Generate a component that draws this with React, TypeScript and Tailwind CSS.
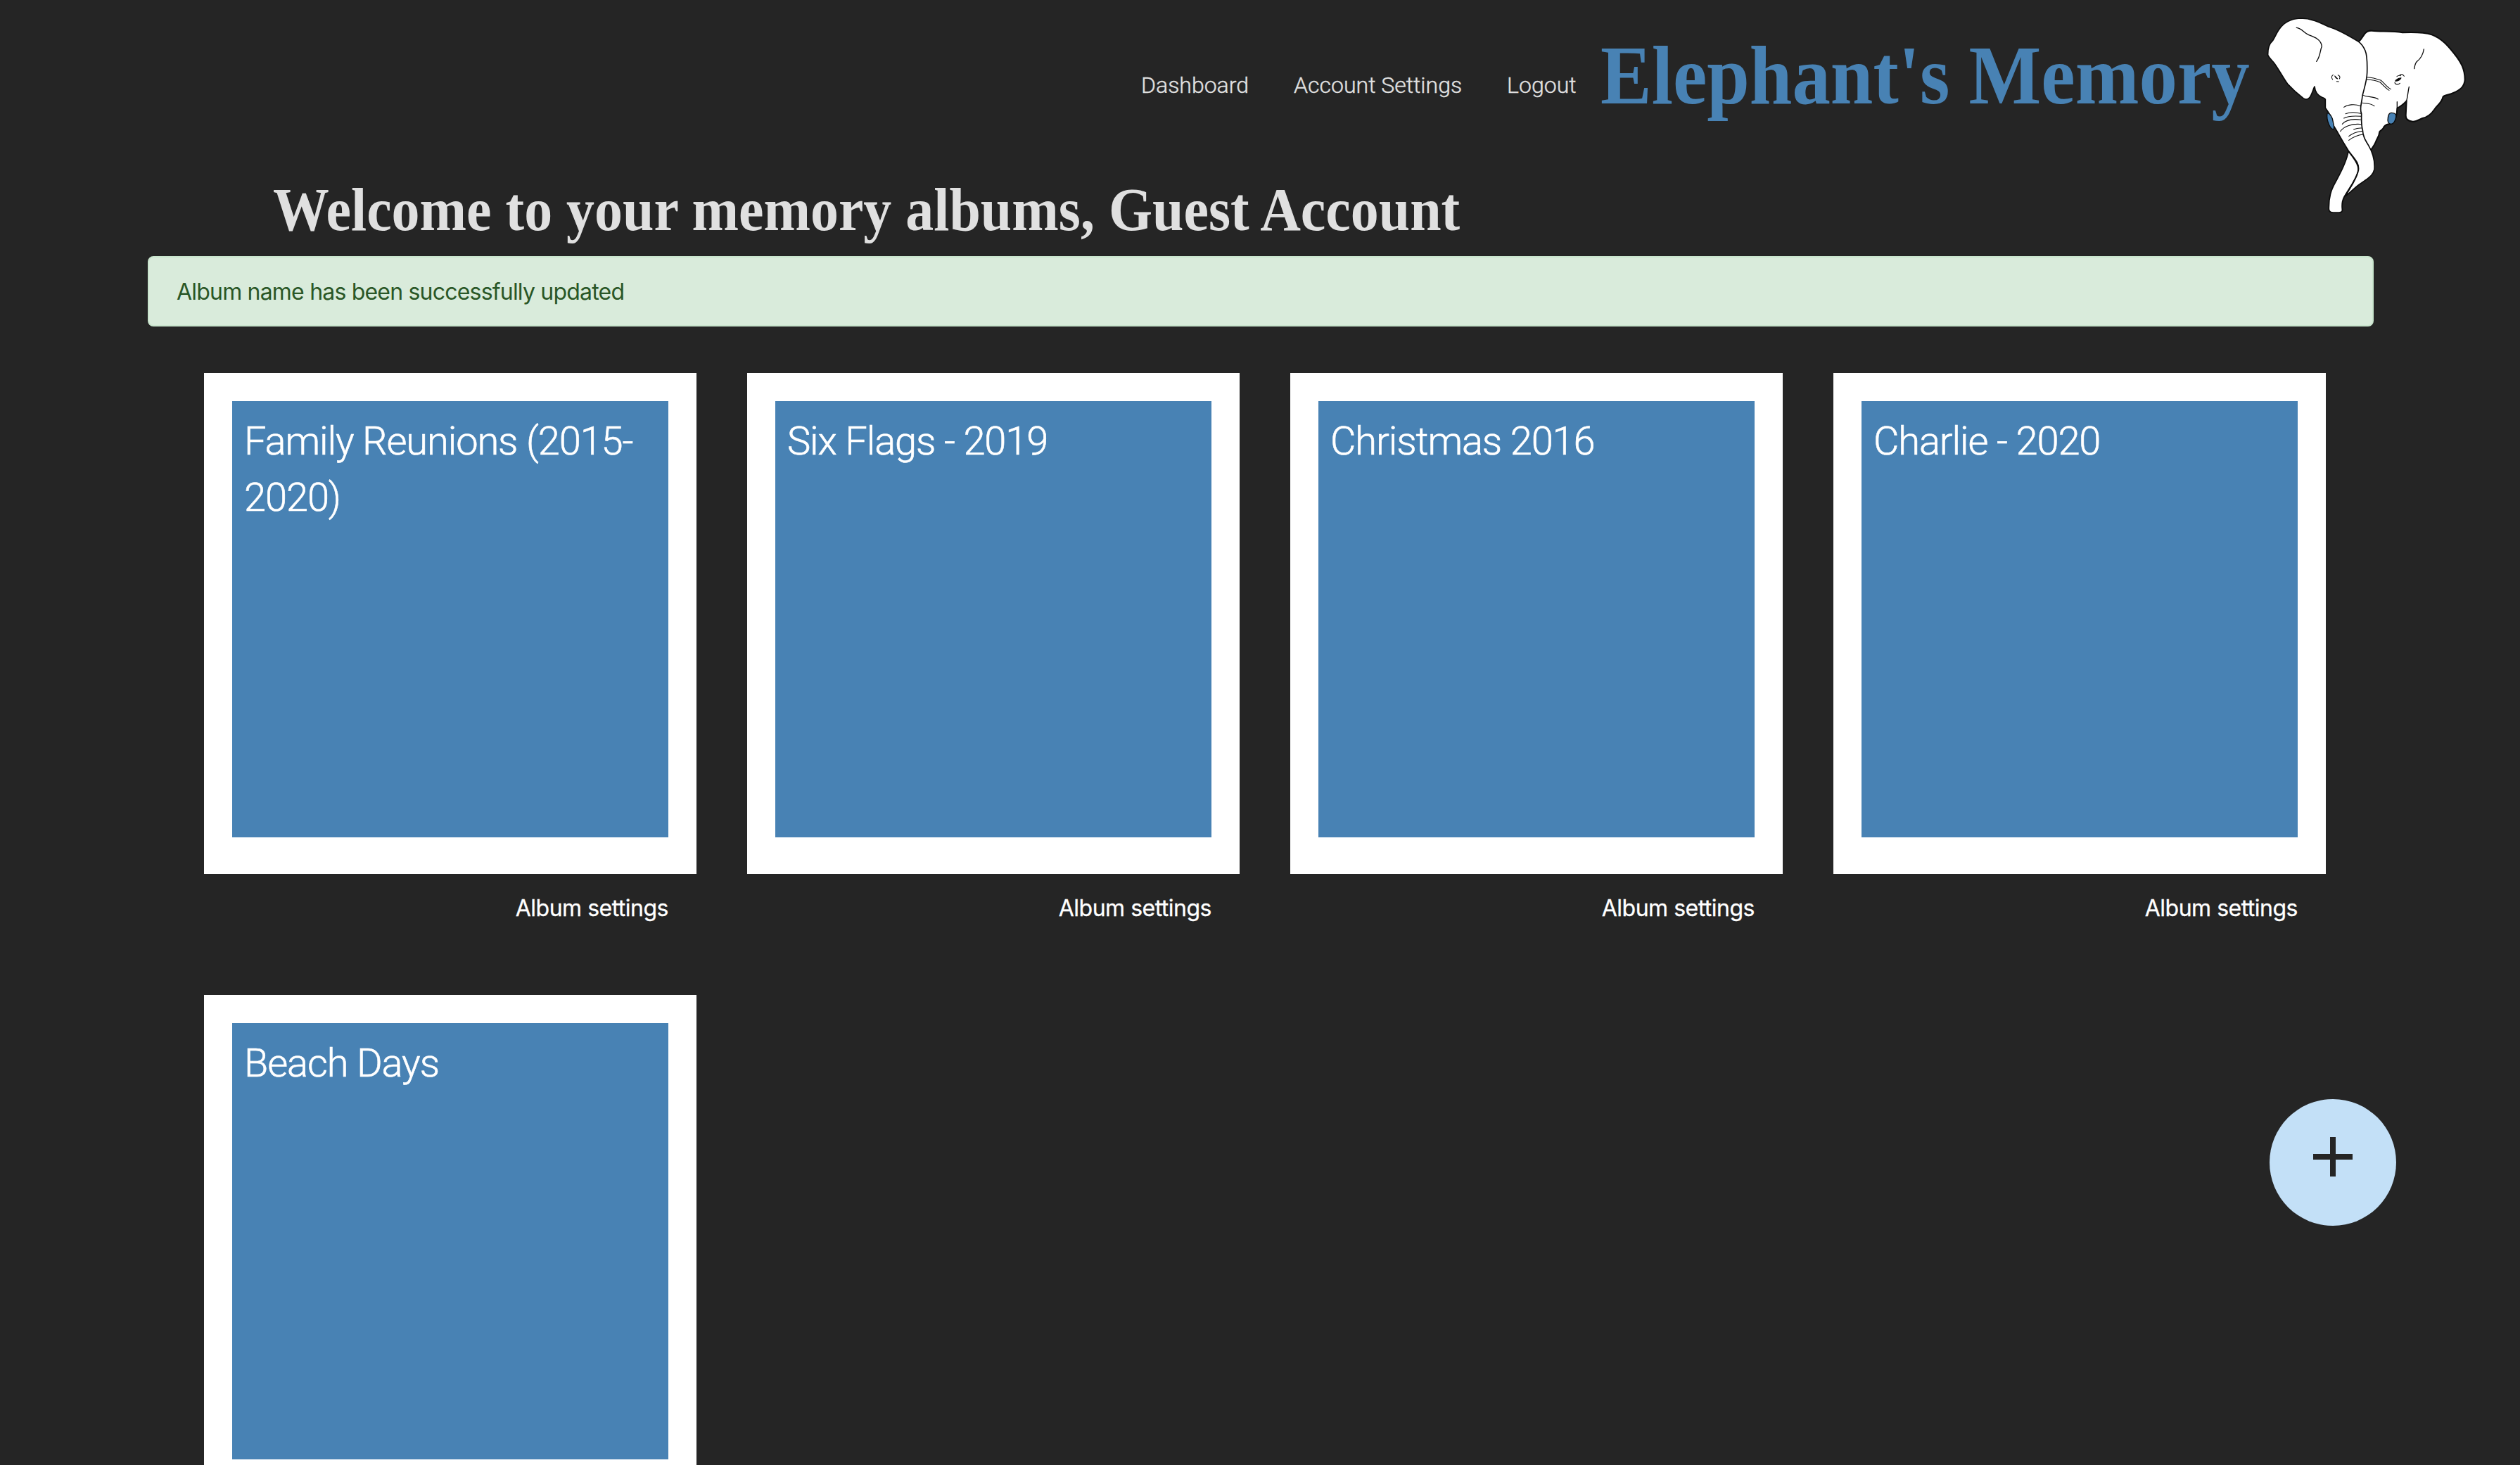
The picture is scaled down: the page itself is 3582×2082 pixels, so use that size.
const albumRows = [
  { names: ["Family Reunions (2015-2020)", "Six Flags - 2019", "Christmas 2016", "Charlie - 2020"], settings: true },
  { names: ["Beach Days"], settings: false },
];
const links = ["Dashboard", "Account Settings", "Logout"];

function ElephantLogo() {
  return (
    <svg viewBox="0 0 960 900" className="absolute left-[3200px] top-[10px] h-[300px] w-[320px]" fill="none" stroke="#0b0b0b" strokeLinecap="round" strokeLinejoin="round">
      <path fill="#fff" strokeWidth="6" d="M458 148C470 138 474 126 484 114C492 103 500 100 514 101C550 106 600 100 645 109C690 107 735 107 770 118C815 135 842 170 865 198C895 235 911 265 911 310C909 340 890 354 862 366C846 374 826 374 818 382C812 410 795 415 780 438C765 460 750 470 730 474C712 482 700 490 688 488C668 486 658 478 659 462L662 400C650 415 635 424 622 432C622 465 612 492 598 498C580 498 572 502 566 510C562 525 552 524 547 532C545 555 535 560 531 575C525 590 518 598 510 610L470 560L440 400Z" />
      <path fill="#fff" strokeWidth="5" d="M414 615C408 655 385 700 360 745C340 780 330 810 331 862C332 872 338 876 350 876H375C385 876 389 872 388 862C386 845 388 825 396 810C415 775 445 740 455 700C460 680 450 660 414 615Z" />
      <path fill="#fff" strokeWidth="5" d="M458 148C420 125 370 95 330 84C290 65 255 48 210 48C165 50 135 70 117 98C108 112 100 130 92 143C78 155 70 175 71 205C78 220 90 228 100 242C120 270 135 300 155 328C175 350 200 372 222 389C232 396 242 394 249 386C260 370 264 350 270 339C272 360 282 375 300 384C308 388 315 388 316 394V430C330 450 345 470 350 505C365 525 375 550 414 612C438 645 462 664 457 696C448 738 418 775 403 805C430 785 445 765 470 750C500 728 520 718 525 692C528 650 515 615 500 590C485 565 476 550 475 525C468 500 470 480 470 455C460 430 472 410 474 378C482 345 493 315 494 280C495 240 492 200 486 186C480 172 472 158 458 148Z" />
      <g fill="#4882b4" strokeWidth="4">
        <path d="M324 452C335 452 346 470 348 485C350 500 356 510 352 520C345 523 337 514 331 500C323 482 322 465 324 452Z" />
        <path d="M596 451C612 450 620 457 617 470C614 486 610 498 596 499C584 498 580 488 583 474C584 460 588 452 596 451Z" />
      </g>
      <g strokeWidth="4">
        <path d="M193 88C215 90 222 108 245 119C270 128 298 138 301 168C293 185 295 210 278 232M736 180C732 205 722 220 707 232C698 240 698 250 695 263" />
        <path d="M673 340C668 360 668 380 662 400M622 404V430" />
      </g>
      <g strokeWidth="3.2">
        <path d="M494 299C510 300 530 304 552 312C566 322 575 340 595 350M492 309C510 310 535 314 550 321C562 332 572 345 588 355M478 376C488 384 525 380 541 393M474 409C490 411 512 410 525 422" />
        <path d="M395 427C410 416 440 412 467 422M402 455C420 448 445 448 467 454M395 474C415 463 440 464 468 466M388 499C405 480 435 476 468 481M380 530C395 508 430 496 470 500M437 522C448 517 460 515 472 516M416 551C430 540 450 532 474 529M416 568C432 556 450 546 476 543" />
        <path d="M349 289C342 294 341 302 347 309M370 290C378 293 380 300 376 306M364 317L373 318M621 296C627 291 633 291 638 293M634 288C642 284 648 288 652 295M612 322C614 332 628 331 634 325" />
        <path fill="#0b0b0b" d="M356 294L368 306L361 302ZM614 316C618 307 630 303 639 302C635 311 624 315 614 316Z" />
      </g>
    </svg>
  );
}

export default function App() {
  return (
    <div className="relative h-[2082px] w-[3582px] overflow-hidden bg-[#252525] font-['Roboto',sans-serif]">
      <header className="flex h-[240px] items-start pl-[1622px]">
        <nav className="flex gap-16 pt-[97px] text-[32px] leading-[48px] font-light whitespace-nowrap text-[#e0e0e0] [-webkit-text-stroke:0.4px_#e0e0e0]">
          {links.map((l) => <a key={l}>{l}</a>)}
        </nav>
        <h1 className="ml-[34px] origin-left scale-x-[0.923] pt-[40px] font-['Liberation_Serif',serif] text-[118px] leading-[136px] font-bold whitespace-nowrap text-[#4882b4]">Elephant's Memory</h1>
        <ElephantLogo />
      </header>
      <h2 className="ml-[388px] h-[124px] w-max origin-left scale-x-[0.929] pt-[8px] font-['Liberation_Serif',serif] text-[86px] leading-[100px] font-bold whitespace-nowrap text-[#e0e0e0]">Welcome to your memory albums, Guest Account</h2>
      <div className="ml-[210px] flex h-[100px] w-[3164px] items-center rounded-[8px] border-2 border-[#c9e5cd] bg-[#d9ebdb] pt-[2px] pl-[39px] font-['Inter',sans-serif] text-[32px] tracking-[-0.8px] text-[#2a5727]">Album name has been successfully updated</div>
      <main className="ml-[290px] pt-[66px]">
        {albumRows.map((row) => (
          <div key={row.names[0]} className="flex h-[884px] gap-[72px]">
            {row.names.map((name) => (
              <section key={name}>
                <div className="h-[712px] w-[700px] bg-white p-[40px]">
                  <div className="h-[620px] bg-[#4882b4] px-[17px] pt-[17px] text-[56px] leading-[80px] font-light tracking-[-1.1px] text-white [-webkit-text-stroke:0.6px_white]">{name}</div>
                </div>
                {row.settings && (
                  <p className="pt-[25px] pr-[40px] text-right font-['Inter',sans-serif] text-[32px] leading-[48px] tracking-[-0.5px] text-white [-webkit-text-stroke:0.3px_white]">Album settings</p>
                )}
              </section>
            ))}
          </div>
        ))}
      </main>
      <button className="absolute left-[3226px] top-[1562px] flex size-[180px] justify-center rounded-full bg-[#c3e0f7] pt-[54px]">
        <svg viewBox="0 0 56 56" className="size-[56px]" fill="#252525"><path d="M24 0h8v24h24v8H32v24h-8V32H0v-8h24z" /></svg>
      </button>
    </div>
  );
}
